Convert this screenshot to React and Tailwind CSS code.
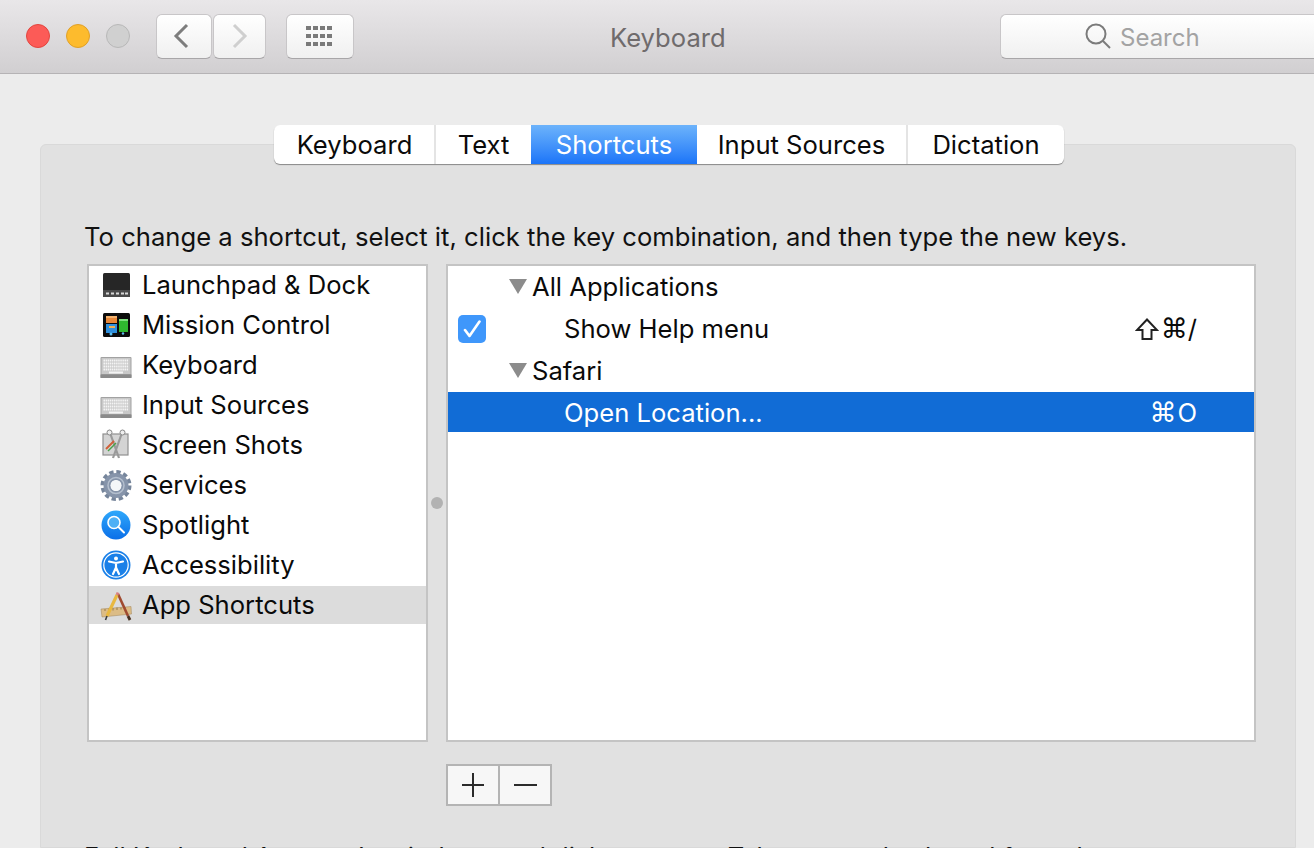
import React from "react";

const Laun = () => (
  <svg width="32" height="32" viewBox="0 0 32 32" className="shrink-0">
    <rect x="3" y="4" width="27" height="24" rx="1.5" fill="#262626" />
    <rect x="3" y="21" width="27" height="7" fill="#4a4a4a" />
    {[6, 11, 16, 21, 25].map((x) => <rect key={x} x={x} y="23.5" width="3" height="2" fill="#d8d8d8" />)}
  </svg>
);
const Mission = () => (
  <svg width="32" height="32" viewBox="0 0 32 32" className="shrink-0">
    <rect x="3" y="4" width="27" height="24" rx="1.5" fill="#0c0c0c" />
    <rect x="6" y="7" width="11" height="7" fill="#e8883a" />
    <rect x="6" y="7" width="11" height="2" fill="#f4b36e" />
    <rect x="6" y="15" width="11" height="9" fill="#2f8fdc" />
    <rect x="9" y="17" width="6" height="2" fill="#f0b050" />
    <rect x="19" y="10" width="9" height="13" fill="#2fb82f" />
    <rect x="19" y="10" width="9" height="2" fill="#7fe07f" />
    <circle cx="11" cy="25" r="1.5" fill="#5cc0f0" />
    <circle cx="23" cy="24.5" r="1.2" fill="#5cc0f0" />
  </svg>
);
const Kbd = () => (
  <svg width="32" height="32" viewBox="0 0 32 32" className="shrink-0">
    <rect x="0.5" y="8" width="31" height="21" rx="1" fill="#a2a2a2" />
    <rect x="1.5" y="9" width="29" height="16" fill="#c9c9c9" />
    {[11, 14, 17, 20].map((y) => (
      <line key={y} x1="3.5" x2="28.5" y1={y + 0.5} y2={y + 0.5} stroke="#f4f4f4" strokeWidth="2.2" strokeDasharray="1.5 0.6" />
    ))}
    <rect x="9" y="22.5" width="14" height="2" fill="#f4f4f4" />
    <rect x="0.5" y="25.5" width="31" height="3.5" fill="#8a8a8a" />
  </svg>
);
const Shots = () => (
  <svg width="32" height="32" viewBox="0 0 32 32" className="shrink-0">
    <rect x="3" y="5" width="25" height="21" fill="#d4d4d4" stroke="#8f8f8f" strokeWidth="1.2" />
    <path d="M9 1 L19 29 M23 1 L13 29" stroke="#9a9a9a" strokeWidth="2.2" fill="none" />
    <circle cx="9.5" cy="3.5" r="2.5" fill="#eee" stroke="#8a8a8a" />
    <circle cx="22.5" cy="3.5" r="2.5" fill="#eee" stroke="#8a8a8a" />
    <path d="M6 20 L14 12" stroke="#d0603a" strokeWidth="2" />
    <path d="M8 22 L16 14" stroke="#4aa04a" strokeWidth="1.5" />
  </svg>
);
const Gear = () => (
  <svg width="32" height="32" viewBox="0 0 32 32" className="shrink-0">
    <circle cx="16" cy="16.5" r="13" fill="none" stroke="#76859b" strokeWidth="5" strokeDasharray="4.1 2.7" />
    <circle cx="16" cy="16.5" r="9" fill="none" stroke="#8694aa" strokeWidth="7" />
    <circle cx="16" cy="16.5" r="5.2" fill="#f4f6f8" />
    <circle cx="16" cy="16.5" r="8" fill="none" stroke="#b4bfce" strokeWidth="1.5" />
  </svg>
);
const Spot = () => (
  <svg width="32" height="32" viewBox="0 0 32 32" className="shrink-0">
    <defs>
      <linearGradient id="sp" x1="0" x2="0" y1="0" y2="1">
        <stop offset="0" stopColor="#2fa8fb" />
        <stop offset="1" stopColor="#0b6fe8" />
      </linearGradient>
    </defs>
    <circle cx="16" cy="16" r="14.5" fill="url(#sp)" />
    <circle cx="14" cy="13.5" r="6" fill="#4fb0f5" stroke="#fff" strokeWidth="1.6" />
    <path d="M18.5 18 L24 23.5" stroke="#fff" strokeWidth="2" strokeLinecap="round" />
  </svg>
);
const Acc = () => (
  <svg width="32" height="32" viewBox="0 0 32 32" className="shrink-0">
    <circle cx="16" cy="16" r="14.5" fill="#1a80e8" />
    <circle cx="16" cy="16" r="12.2" fill="none" stroke="#fff" strokeWidth="1.2" />
    <circle cx="16" cy="9.5" r="2" fill="#fff" />
    <path d="M9 12.5 L16 14 L23 12.5 M16 14 L16 18.5 M16 18.5 L13 25 M16 18.5 L19 25" stroke="#fff" strokeWidth="2.2" fill="none" strokeLinecap="round" />
  </svg>
);
const AppIcon = () => (
  <svg width="32" height="32" viewBox="0 0 32 32" className="shrink-0">
    <path d="M1 20 L31 17.5 L31.5 25 L2 28 Z" fill="#dcbc86" stroke="#a3865a" strokeWidth="0.5" />
    <path d="M5 22 V20 M9 22 V19.5 M13 21.5 V19 M17 21 V18.5 M21 20.5 V18.5 M25 20 V18" stroke="#7a5f30" strokeWidth="0.7" />
    <path d="M18 5 L28 27" stroke="#a04a30" strokeWidth="2.6" />
    <path d="M28 27 L30 31" stroke="#4a3020" strokeWidth="2.8" />
    <path d="M17 6 L7 27" stroke="#e8b840" strokeWidth="3.2" />
    <path d="M7 27 L5.5 31" stroke="#3a3a3a" strokeWidth="1.6" />
    <path d="M17 6 L18 3.5" stroke="#d88080" strokeWidth="2.8" />
  </svg>
);

const items = [
  ["Launchpad & Dock", Laun],
  ["Mission Control", Mission],
  ["Keyboard", Kbd],
  ["Input Sources", Kbd],
  ["Screen Shots", Shots],
  ["Services", Gear],
  ["Spotlight", Spot],
  ["Accessibility", Acc],
  ["App Shortcuts", AppIcon],
];

const Tri = () => (
  <svg width="18" height="15" viewBox="0 0 18 15" className="ml-[61px] mr-[5px] shrink-0">
    <path d="M0 0 H18 L9 15 Z" fill="#8c8c8c" />
  </svg>
);

const tabs = [
  ["Keyboard", "w-[162px] pl-[1px]"],
  ["Text", "w-[95px]"],
  ["Shortcuts", "w-[166px]"],
  ["Input Sources", "w-[211px]"],
  ["Dictation", "w-[156px]"],
];

const toolBtn = "shrink-0 h-[45px] rounded-[6px] border border-[#c8c6c8] border-b-[#a8a6a8] bg-linear-to-b from-white to-[#f0f0f0] flex items-center justify-center";

export default function App() {
  return (
    <div className="h-[848px] w-[1314px] overflow-hidden flex flex-col bg-[#ececec] font-['Inter','Liberation_Sans',sans-serif] text-[25.6px] text-[#0a0a0a]">
      <header className="relative h-[74px] shrink-0 flex items-center pl-[26px] pb-[1px] border-b border-[#b5b3b5] bg-linear-to-b from-[#e9e7e9] to-[#d1cfd1]">
        <div className="shrink-0 w-6 h-6 rounded-full bg-[#fc5b57] border border-[#e2463f]" />
        <div className="shrink-0 ml-4 w-6 h-6 rounded-full bg-[#fdbb2d] border border-[#e0a028]" />
        <div className="shrink-0 ml-4 w-6 h-6 rounded-full bg-[#d0d0d0] border border-[#b8b8b8]" />
        <button className={`ml-[26px] w-[56px] ${toolBtn}`}>
          <svg width="16" height="26" viewBox="0 0 16 26" className="mr-[6px]"><path d="M14 2 L3 13 L14 24" fill="none" stroke="#7d7d7d" strokeWidth="3" /></svg>
        </button>
        <button className={`ml-[1px] w-[53px] ${toolBtn}`}>
          <svg width="16" height="26" viewBox="0 0 16 26"><path d="M2 2 L13 13 L2 24" fill="none" stroke="#cfcfcf" strokeWidth="3" /></svg>
        </button>
        <button className={`ml-[20px] w-[68px] ${toolBtn}`}>
          <svg width="30" height="20" viewBox="0 0 30 20" fill="#7a7a7a">
            {[0, 8, 16].map((y) => [1, 8, 15, 22].map((x) => <rect key={`${x}-${y}`} x={x} y={y} width="5" height="4" />))}
          </svg>
        </button>
        <h1 className="shrink-0 ml-[256px] mt-[4px] w-[114px] text-center font-normal text-[#6f6b6c] whitespace-nowrap">Keyboard</h1>
        <div className="ml-[276px] w-[340px] h-[45px] shrink-0 rounded-l-[6px] border border-r-0 border-[#c8c6c8] border-b-[#a8a6a8] bg-linear-to-b from-white to-[#f0f0f0] flex items-center pl-[84px] gap-[9px]">
          <svg width="26" height="26" viewBox="0 0 26 26" fill="none" stroke="#7b7b7b" strokeWidth="2"><circle cx="11" cy="11" r="9.5" /><path d="M18 18 L25 25" /></svg>
          <span className="mt-[4px] text-[24px] text-[#a3a3a3]">Search</span>
        </div>
      </header>

      <main className="flex-1 min-h-0 flex flex-col pt-[51px] pl-[40px] pr-[18px]">
        <div className="relative z-10 self-start ml-[234px] flex h-[39px] rounded-[6px] bg-white shadow-[0_1px_1px_rgba(0,0,0,0.4)]">
          {tabs.map(([t, w], i) => (
            <div
              key={t}
              className={
                t === "Shortcuts"
                  ? `${w} flex items-center justify-center pt-[2px] bg-linear-to-b from-[#6cb3fb] to-[#1a74f8] text-white`
                  : `${w} flex items-center justify-center pt-[2px] ${i < 4 && i !== 1 ? "border-r-2 border-[#e4e4e4]" : ""}`
              }
            >
              {t}
            </div>
          ))}
        </div>

        <section className="-mt-[20px] flex-1 min-h-0 rounded-t-[6px] border border-[#d9d9d9] bg-[#e1e1e1] pt-[76px] pl-[46px] pr-[38px]">
          <p className="h-[32px] leading-[32px] ml-[-3px] tracking-[0.02px] whitespace-nowrap text-[#111]">
            To change a shortcut, select it, click the key combination, and then type the new keys.
          </p>
          <div className="mt-[11px] flex h-[478px]">
            <ul className="w-[341px] shrink-0 border-2 border-[#c4c4c4] bg-white">
              {items.map(([t, Icon]) => (
                <li key={t} className={`h-[38px] mb-[2px] flex items-center pl-[11px] ${t === "App Shortcuts" ? "bg-[#dcdcdc]" : ""}`}>
                  <Icon />
                  <span className="ml-[10px]">{t}</span>
                </li>
              ))}
            </ul>
            <div className="w-[18px] shrink-0 flex items-center justify-center">
              <div className="w-3 h-3 rounded-full bg-[#b2b2b2]" />
            </div>
            <ul className="w-[810px] shrink-0 border-2 border-[#c4c4c4] bg-white">
              <li className="h-[42px] pb-[2px] flex items-center"><Tri /><span className="mt-[2px]">All Applications</span></li>
              <li className="h-[42px] pb-[2px] flex items-center pl-[10px]">
                <span className="mt-[2px] w-7 h-7 rounded-[5px] bg-[#3f97fb] flex items-center justify-center">
                  <svg width="18" height="18" viewBox="0 0 18 18"><path d="M2 10 L6.5 16 L16.5 1.5" fill="none" stroke="#fff" strokeWidth="2.6" strokeLinecap="round" strokeLinejoin="round" /></svg>
                </span>
                <span className="ml-[78px] mt-[2px]">Show Help menu</span>
                <span className="ml-auto mr-[57px] mt-[2px] flex items-center">
                  <svg width="24" height="24" viewBox="0 0 24 24" aria-label="Shift" className="mr-[2px]">
                    <path d="M12 2.5 L22 13 H16.5 V22 H7.5 V13 H2 Z" fill="none" stroke="#222" strokeWidth="2" />
                  </svg>
                  <span className="font-['DejaVu_Sans',sans-serif] text-[27px]">⌘</span>
                  <span>/</span>
                </span>
              </li>
              <li className="h-[42px] pb-[2px] flex items-center"><Tri /><span className="mt-[2px]">Safari</span></li>
              <li className="h-10 pt-[2px] flex items-center pl-[116px] bg-[#116cd6] text-white">
                <span>Open Location...</span>
                <span className="ml-auto mr-[57px] flex items-center">
                  <span className="font-['DejaVu_Sans',sans-serif] text-[27px]">⌘</span>
                  <span className="ml-[1px]">O</span>
                </span>
              </li>
            </ul>
          </div>
          <div className="mt-[22px] ml-[359px] flex w-[106px] h-[42px] border-2 border-[#b4b4b4] bg-[#f7f7f7]">
            <button className="flex-1 border-r-2 border-[#b4b4b4] flex items-center justify-center">
              <svg width="24" height="24" viewBox="0 0 24 24"><path d="M1 12 H23 M12 0 V24" stroke="#2b2b2b" strokeWidth="2" /></svg>
            </button>
            <button className="flex-1 flex items-center justify-center">
              <svg width="24" height="24" viewBox="0 0 24 24"><path d="M1 12 H24" stroke="#2b2b2b" strokeWidth="2" /></svg>
            </button>
          </div>
          <p className="mt-[35px] ml-[-3px] h-[32px] leading-[32px] tracking-[-0.06px] whitespace-nowrap text-[#111]">
            Full Keyboard Access: In windows and dialogs, press Tab to move keyboard focus between:
          </p>
        </section>
      </main>
    </div>
  );
}
